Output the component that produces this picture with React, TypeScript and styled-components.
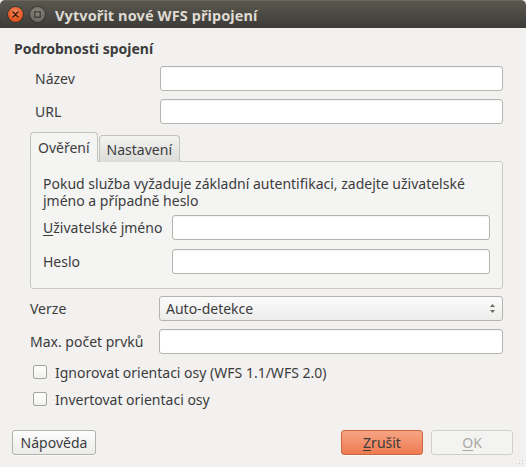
import React from "react";
import styled, { createGlobalStyle } from "styled-components";

const Global = createGlobalStyle`
  html, body { margin: 0; padding: 0; background: #f2f1f0; }
  body { font-family: "Noto Sans", "DejaVu Sans", sans-serif; font-size: 14px; color: #3c3c3c; }
  * { box-sizing: border-box; }
`;

const Window = styled.div`
  width: 526px;
  height: 467px;
  background: #f2f1f0;
  border-radius: 5px 5px 0 0;
  overflow: hidden;
  display: flex;
  flex-direction: column;
  position: relative;
`;

const TitleBar = styled.div`
  height: 28px;
  flex: none;
  background: linear-gradient(#5a574f, #3c3b37);
  border-top: 1px solid #6a665d;
  display: flex;
  align-items: center;
  padding-left: 8px;
  gap: 4px;
`;

const WinButton = styled.div<{ $close?: boolean }>`
  width: 15px;
  height: 15px;
  border-radius: 50%;
  display: flex;
  align-items: center;
  justify-content: center;
  background: ${(p) =>
    p.$close
      ? "radial-gradient(circle at 50% 35%, #f58b5d, #e0501c 70%, #b93e12)"
      : "radial-gradient(circle at 50% 35%, #8a877f, #6c6961 70%, #55524b)"};
  box-shadow: 0 0 0 1px rgba(0,0,0,0.25);
  margin-right: 3px;
`;

const Title = styled.div`
  font-weight: bold;
  font-size: 14.5px;
  color: #dfdbd2;
  margin-left: 3px;
  letter-spacing: 0.1px;
`;

const Body = styled.div`
  flex: 1;
  display: flex;
  flex-direction: column;
  padding: 12px 23px 0 14px;
`;

const GroupTitle = styled.div`
  font-weight: bold;
  height: 18px;
  line-height: 18px;
  color: #3c3c3c;
`;

const FormGrid = styled.div<{ $indent: number; $label: number; $gap: number }>`
  display: grid;
  grid-template-columns: ${(p) => p.$label}px 1fr;
  row-gap: ${(p) => p.$gap}px;
  padding-left: ${(p) => p.$indent}px;
  align-items: center;
`;

const Label = styled.label`
  color: #3c3c3c;
  line-height: 25px;
  white-space: nowrap;
`;

const Input = styled.div`
  height: 25px;
  background: #ffffff;
  border: 1px solid #b4b4b0;
  border-radius: 3px;
  box-shadow: inset 0 1px 1px rgba(0,0,0,0.05);
`;

const Combo = styled.div`
  height: 25px;
  border: 1px solid #b4b4b0;
  border-radius: 3px;
  background: linear-gradient(#fbfbfb, #ececeb);
  display: flex;
  align-items: center;
  padding-left: 6px;
  padding-right: 6px;
  justify-content: space-between;
  color: #3c3c3c;
`;

const Tabs = styled.div`
  margin-left: 16px;
  margin-top: 8px;
  display: flex;
  flex-direction: column;
`;

const TabBar = styled.div`
  display: flex;
  align-items: flex-end;
  height: 30px;
  position: relative;
  z-index: 1;
`;

const Tab = styled.div<{ $active?: boolean }>`
  height: ${(p) => (p.$active ? 30 : 27)}px;
  padding: 0 7px;
  display: flex;
  align-items: center;
  border: 1px solid #c2c2bf;
  border-bottom: ${(p) => (p.$active ? "1px solid #f4f4f3" : "none")};
  border-radius: 4px 4px 0 0;
  background: ${(p) => (p.$active ? "#f4f4f3" : "linear-gradient(#f2f2f1, #dcdcda)")};
  color: #3c3c3c;
  margin-right: 1px;
`;

const Panel = styled.div`
  margin-top: -1px;
  height: 128px;
  border: 1px solid #c9c9c6;
  border-radius: 0 3px 3px 3px;
  background: #f4f4f3;
  padding: 13px 12px 0 12px;
  display: flex;
  flex-direction: column;
`;

const Info = styled.p`
  margin: 0 0 6px 0;
  line-height: 17px;
  color: #3c3c3c;
`;

const Under = styled.span`
  text-decoration: underline;
  text-underline-offset: 2px;
`;

const Checks = styled.div`
  display: flex;
  flex-direction: column;
  gap: 13px;
  margin-top: 11px;
  padding-left: 19px;
`;

const CheckRow = styled.div`
  display: flex;
  align-items: center;
  gap: 8px;
  height: 14px;
`;

const Box = styled.div`
  width: 14px;
  height: 14px;
  border: 1px solid #a4a49f;
  border-radius: 2px;
  background: linear-gradient(#ffffff, #f0f0ef);
`;

const Footer = styled.div`
  margin-top: auto;
  display: flex;
  padding: 0 13px 12px 12px;
  align-items: center;
`;

const Button = styled.div<{ $variant?: "default" | "suggested" | "disabled" }>`
  height: 25px;
  display: flex;
  align-items: center;
  justify-content: center;
  border-radius: 3px;
  padding: 0 8px;
  border: 1px solid
    ${(p) => (p.$variant === "suggested" ? "#c9673f" : p.$variant === "disabled" ? "#cfcfcc" : "#b3b3ae")};
  background: ${(p) =>
    p.$variant === "suggested"
      ? "linear-gradient(#f7a484, #ee7b51)"
      : p.$variant === "disabled"
      ? "#f3f3f2"
      : "linear-gradient(#fdfdfd, #ebebea)"};
  color: ${(p) => (p.$variant === "disabled" ? "#a9a9a6" : "#3c3c3c")};
  box-shadow: ${(p) => (p.$variant === "disabled" ? "none" : "0 1px 0 rgba(255,255,255,0.6)")};
`;

const Spacer = styled.div`
  flex: 1;
`;

const Grip = styled.div`
  position: absolute;
  right: 2px;
  bottom: 2px;
  width: 9px;
  height: 9px;
  background-image: radial-gradient(circle, #c8c8c5 0.8px, transparent 1px);
  background-size: 3px 3px;
  clip-path: polygon(100% 0, 100% 100%, 0 100%);
`;

export default function App() {
  return (
    <>
      <Global />
      <Window>
        <TitleBar>
          <WinButton $close>
            <svg width="7" height="7" viewBox="0 0 7 7">
              <path d="M1 1 L6 6 M6 1 L1 6" stroke="#3b1a0c" strokeWidth="1.4" strokeLinecap="round" />
            </svg>
          </WinButton>
          <WinButton>
            <svg width="7" height="7" viewBox="0 0 7 7">
              <rect x="0.8" y="0.8" width="5.4" height="5.4" fill="none" stroke="#3a3934" strokeWidth="1.2" />
            </svg>
          </WinButton>
          <Title>Vytvořit nové WFS připojení</Title>
        </TitleBar>
        <Body>
          <GroupTitle>Podrobnosti spojení</GroupTitle>
          <FormGrid $indent={21} $label={125} $gap={8} style={{ marginTop: 8 }}>
            <Label>Název</Label>
            <Input />
            <Label>URL</Label>
            <Input />
          </FormGrid>
          <Tabs>
            <TabBar>
              <Tab $active>Ověření</Tab>
              <Tab>Nastavení</Tab>
            </TabBar>
            <Panel>
              <Info>
                Pokud služba vyžaduje základní autentifikaci, zadejte uživatelské jméno a případně heslo
              </Info>
              <FormGrid $indent={0} $label={129} $gap={9}>
                <Label>
                  <Under>U</Under>živatelské jméno
                </Label>
                <Input />
                <Label>Heslo</Label>
                <Input />
              </FormGrid>
            </Panel>
          </Tabs>
          <FormGrid $indent={16} $label={129} $gap={8} style={{ marginTop: 7 }}>
            <Label>Verze</Label>
            <Combo>
              <span>Auto-detekce</span>
              <svg width="7" height="11" viewBox="0 0 7 11">
                <path d="M3.5 1 L6 4 L1 4 Z" fill="#6a6a66" />
                <path d="M3.5 10 L6 7 L1 7 Z" fill="#6a6a66" />
              </svg>
            </Combo>
            <Label>Max. počet prvků</Label>
            <Input />
          </FormGrid>
          <Checks>
            <CheckRow>
              <Box />
              <span>Ignorovat orientaci osy (WFS 1.1/WFS 2.0)</span>
            </CheckRow>
            <CheckRow>
              <Box />
              <span>Invertovat orientaci osy</span>
            </CheckRow>
          </Checks>
        </Body>
        <Footer>
          <Button style={{ width: 84 }}>Nápověda</Button>
          <Spacer />
          <Button $variant="suggested" style={{ width: 82 }}>
            <span>
              <Under>Z</Under>rušit
            </span>
          </Button>
          <Button $variant="disabled" style={{ width: 82, marginLeft: 8 }}>
            <span>
              <Under>O</Under>K
            </span>
          </Button>
        </Footer>
        <Grip />
      </Window>
    </>
  );
}
